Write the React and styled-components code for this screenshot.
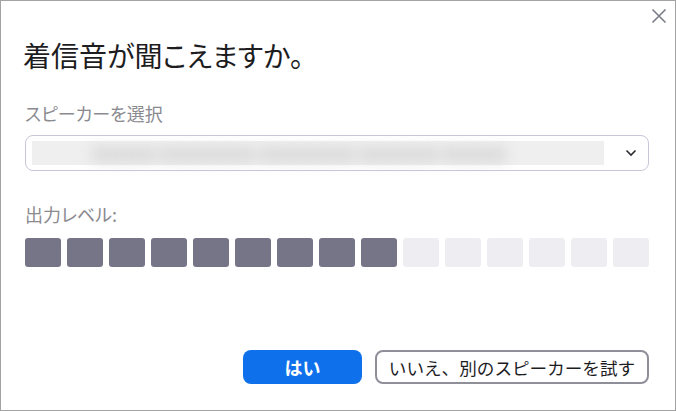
import React from 'react';
import styled, { createGlobalStyle } from 'styled-components';

const GlobalStyle = createGlobalStyle`
  html, body {
    margin: 0;
    padding: 0;
    background: #ffffff;
  }
  body {
    font-family: "Noto Sans CJK JP", "Noto Sans", sans-serif;
  }
`;

const Window = styled.div`
  position: relative;
  box-sizing: border-box;
  width: 676px;
  height: 411px;
  border: 1px solid #a3a3a3;
  background: #ffffff;
  padding: 36px 26px 26px 24px;
  display: flex;
  flex-direction: column;
  font-feature-settings: "palt";
`;

const CloseButton = styled.button`
  position: absolute;
  top: 6px;
  right: 7px;
  width: 18px;
  height: 18px;
  padding: 0;
  border: none;
  background: transparent;
  display: flex;
  align-items: center;
  justify-content: center;
`;

const Title = styled.h1`
  margin: 0 0 0 -2px;
  font-size: 28px;
  line-height: 36px;
  font-weight: 400;
  color: #1d1d1f;
`;

const FieldLabel = styled.div`
  margin-top: ${({ top }) => top}px;
  font-size: 18px;
  line-height: 24px;
  color: #8a8a8f;
`;

const Select = styled.div`
  margin-top: 10px;
  box-sizing: border-box;
  height: 36px;
  border: 1px solid #c9c6d8;
  border-radius: 8px;
  display: flex;
  align-items: center;
  padding: 0 11px 0 6px;
`;

const Blurred = styled.div`
  width: 572px;
  height: 24px;
  background: #efefef;
  display: flex;
  align-items: center;
`;

const BlurText = styled.span`
  font-size: 16px;
  color: #d2d2d2;
  white-space: nowrap;
  filter: blur(7px);
  padding-left: 60px;
`;

const Chevron = styled.svg`
  margin-left: auto;
`;

const Meter = styled.div`
  margin-top: 12px;
  display: grid;
  grid-template-columns: repeat(15, 36px);
  gap: 6px;
`;

const Cell = styled.div`
  height: 29px;
  border-radius: 3px;
  background: ${({ on }) => (on ? '#757587' : '#eeeef2')};
`;

const Actions = styled.div`
  margin-top: auto;
  display: flex;
  justify-content: flex-end;
  gap: 13px;
`;

const PrimaryButton = styled.button`
  box-sizing: border-box;
  width: 119px;
  height: 34px;
  border: none;
  border-radius: 8px;
  background: #0e71eb;
  color: #ffffff;
  font-family: inherit;
  font-size: 18px;
  font-weight: 700;
  padding: 0;
`;

const SecondaryButton = styled.button`
  box-sizing: border-box;
  width: 274px;
  height: 34px;
  border: 2px solid #8f8f99;
  border-radius: 8px;
  background: #ffffff;
  color: #1d1d1f;
  font-family: inherit;
  font-size: 17.6px;
  font-weight: 400;
  padding: 0;
`;

const levels = Array.from({ length: 15 }, (_, i) => i < 9);

export default function App() {
  return (
    <>
      <GlobalStyle />
      <Window>
        <CloseButton aria-label="close">
          <svg width="16" height="16" viewBox="0 0 16 16">
            <path d="M1.5 1.5 L14.5 14.5 M14.5 1.5 L1.5 14.5" stroke="#7b7b88" strokeWidth="1.6" />
          </svg>
        </CloseButton>
        <Title>着信音が聞こえますか。</Title>
        <FieldLabel top={28}>スピーカーを選択</FieldLabel>
        <Select>
          <Blurred>
            <BlurText>■■■■ ■■■■■■ ■■■■■■ ■■■■■ ■■■■</BlurText>
          </Blurred>
          <Chevron width="12" height="8" viewBox="0 0 12 8">
            <path d="M1.5 1.5 L6 6 L10.5 1.5" fill="none" stroke="#2b2b33" strokeWidth="1.6" />
          </Chevron>
        </Select>
        <FieldLabel top={31}>出力レベル:</FieldLabel>
        <Meter>
          {levels.map((on, i) => (
            <Cell key={i} on={on} />
          ))}
        </Meter>
        <Actions>
          <PrimaryButton>はい</PrimaryButton>
          <SecondaryButton>いいえ、別のスピーカーを試す</SecondaryButton>
        </Actions>
      </Window>
    </>
  );
}
